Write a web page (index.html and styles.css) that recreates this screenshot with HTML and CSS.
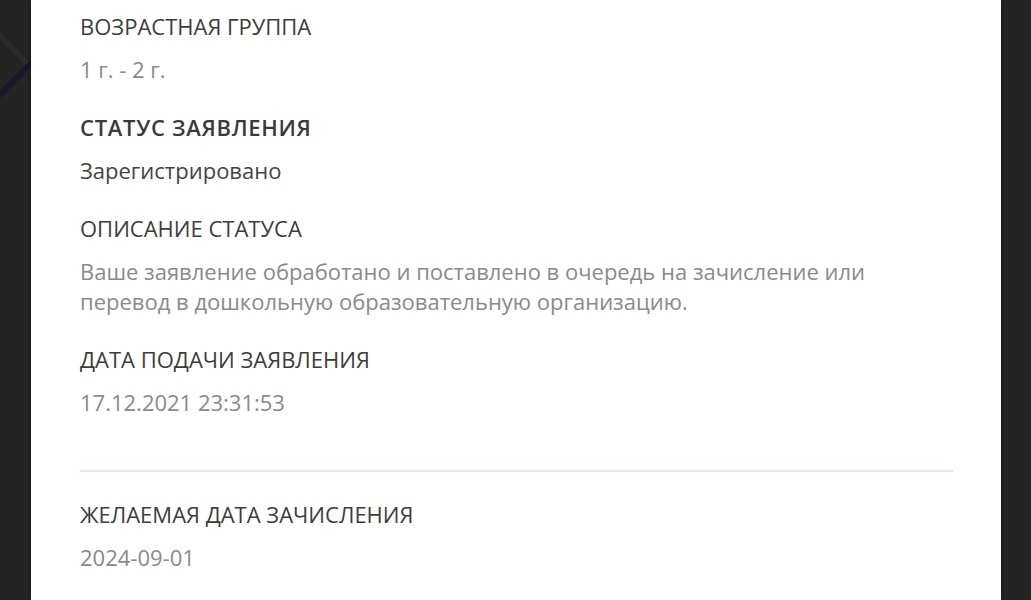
FILE: index.html
```html
<!DOCTYPE html>
<html lang="ru">
<head>
  <meta charset="UTF-8" />
  <meta name="viewport" content="width=device-width, initial-scale=1.0"/>
  <title>Заявление</title>
  <link rel="stylesheet" href="styles.css">
</head>
<body>
  <div class="card">
    <div class="field">
      <div class="label">Возрастная группа</div>
      <div class="value">1 г. - 2 г.</div>
    </div>

    <div class="field">
      <div class="label label-strong">Статус заявления</div>
      <div class="value value-dark">Зарегистрировано</div>
    </div>

    <div class="field">
      <div class="label">Описание статуса</div>
      <div class="value">Ваше заявление обработано и поставлено в очередь на зачисление или перевод в дошкольную образовательную организацию.</div>
    </div>

    <div class="field">
      <div class="label">Дата подачи заявления</div>
      <div class="value">17.12.2021 23:31:53</div>
    </div>

    <hr class="divider" />

    <div class="field">
      <div class="label">Желаемая дата зачисления</div>
      <div class="value">2024-09-01</div>
    </div>
  </div>
</body>
</html>
```

FILE: styles.css
```css
:root {
  --page: #242424;
  --card: #ffffff;
  --label: #3d3d3d;
  --value: #8a8a8a;
  --line: #f2e2da;
}

html, body {
  height: 100%;
}

body {
  margin: 0;
  padding: 0;
  font-family: 'Open Sans', 'Noto Sans', sans-serif;
  background:
    linear-gradient(135deg, transparent 0 64px, #17182a 64px 70px, transparent 70px),
    linear-gradient(45deg, transparent 0 57px, #2b2b2b 57px 62px, transparent 62px),
    var(--page);
  background-size: 31px 120px, 31px 120px, auto;
  background-repeat: no-repeat;
  overflow: hidden;
}

.card {
  background-color: var(--card);
  margin-left: 31px;
  width: 970px;
  min-height: 100%;
  box-sizing: border-box;
  padding: 11px 48px 0 49px;
  box-shadow: 0 0 4px rgba(0, 0, 0, 0.6);
}

.field {
  margin-bottom: 28px;
}

.label {
  font-size: 22px;
  line-height: 30px;
  text-transform: uppercase;
  color: var(--label);
  margin-bottom: 13px;
}

.label-strong {
  font-weight: 600;
  letter-spacing: 0.7px;
  color: #3a3a3a;
}

.value {
  font-size: 22px;
  line-height: 30px;
  color: var(--value);
  max-width: 820px;
}

.value-dark {
  color: #444444;
}

.divider {
  border: none;
  height: 2px;
  background: var(--line);
  margin: 53px 0 27px 0;
}
```
